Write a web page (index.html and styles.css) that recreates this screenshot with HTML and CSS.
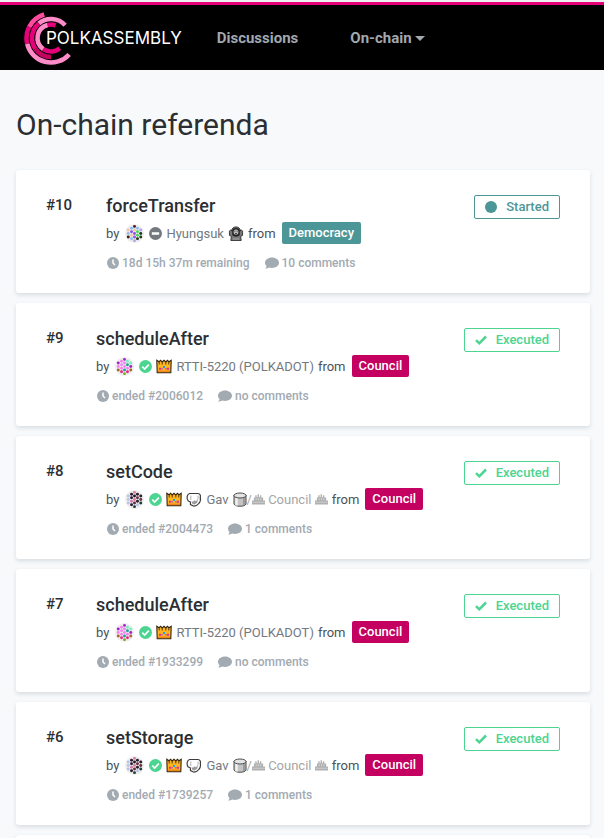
FILE: index.html
```html
<!DOCTYPE html>
<html lang="en">
<head>
<meta charset="utf-8">
<meta name="viewport" content="width=device-width, initial-scale=1">
<title>Polkassembly</title>
<link rel="stylesheet" href="styles.css">
</head>
<body>
<svg class="sprite" aria-hidden="true">
  <symbol id="clock" viewBox="0 0 12 12"><circle cx="6" cy="6" r="6" fill="currentColor"/><path d="M6 2.500V6l2 2" fill="none" stroke="#fff" stroke-width="1.500"/></symbol>
  <symbol id="comment" viewBox="0 0 14 12"><path d="M7 .5c3.900 0 7 2.300 7 5.200s-3.100 5.200-7 5.200c-1.100 0-2.100-.2-3-.5-.9.7-2.200 1.200-3.800 1.200.8-.8 1.300-1.700 1.400-2.500C.6 8.200 0 7 0 5.700 0 2.800 3.100.5 7 .5z" fill="currentColor"/></symbol>
  <symbol id="verified" viewBox="0 0 13 13"><circle cx="6.500" cy="6.500" r="6.500" fill="#4cd591"/><path d="M3.300 6.700l2.300 2.300 4.200-4.400" fill="none" stroke="#fff" stroke-width="1.700"/></symbol>
  <symbol id="minus" viewBox="0 0 13 13"><circle cx="6.500" cy="6.500" r="6.500" fill="#73797f"/><rect x="2.800" y="5.300" width="7.400" height="2.400" rx=".4" fill="#fff"/></symbol>
  <symbol id="check" viewBox="0 0 12 10"><path d="M1 5.200L4.300 8.300 11 1.500" fill="none" stroke="currentColor" stroke-width="2.500"/></symbol>
  <symbol id="crown" viewBox="0 0 16 14"><path d="M.8.800L3 2.300 4.500.800l1.700 1.700L8 .800l1.800 1.700L11.500.800 13 2.300 15.200.800l-.4 12.500H1.200z" fill="#ffb51f" stroke="#33250f" stroke-width="1.100"/><path d="M3.200 2.500V5M6.200 2.500V5M9.800 2.500V5M12.800 2.500V5" stroke="#5a3a10"/><path d="M2 11.800h12" stroke="#f07f1c" stroke-width="1.300"/><path d="M3 8.200h2.200v2H3zM10.800 8.200H13v2h-2.200z" fill="#ec2f80"/><path d="M7 6.500h2v2H7z" fill="#1fa0e8"/><path d="M5.500 8.500h1.200v1.500H5.500zM9.300 8.500h1.200v1.500H9.300z" fill="#8d5bd0"/></symbol>
  <symbol id="beard" viewBox="0 0 15 15"><path d="M3 1.500h8.500c2 .3 2.800 2 2.300 3.700.5 2.500 0 4.800-1.500 6.300-1.200 1.600-2.800 2.700-4.800 2.700L4 12.500l-.2-2.700-2-.8C0 7 0 2.500 3 1.500z" fill="#fff" stroke="#3c3c3c" stroke-width="1.200"/><path d="M4.300 3.500v4.500M11.500 3.500c.4 2 0 3.500-.8 5" fill="none" stroke="#b0b0b0" stroke-width="1"/><path d="M4.800 9.600h2l1.200-1.300 1.500 1 2-1.800-.8 3.200-2.700 1.700-2-.3z" fill="#9a9a9a"/></symbol>
  <symbol id="drum" viewBox="0 0 14 15"><path d="M1 3v9c1 3 11 3 12 0V3z" fill="#c4c4c4" stroke="#4d4d4d"/><path d="M3.500 5.500v8" stroke="#f0f0f0" stroke-width="2.500"/><path d="M11 5.500V13" stroke="#9a9a9a" stroke-width="2"/><ellipse cx="7" cy="3.500" rx="6" ry="2.500" fill="#e4e4e4" stroke="#4d4d4d"/></symbol>
  <symbol id="hall" viewBox="0 0 14 12"><path d="M0 7.500h2V4.500h1.500V2H5v2h1V1h1.500v3h1V2H10v2.500h2v3h2V12H0z" fill="#b0b0b0"/><path d="M.5 9.500h13" stroke="#cfcfcf"/><path d="M4.500 5v2.500M7 5v2.500M9.500 5v2.500" stroke="#d5d5d5"/></symbol>
  <symbol id="hood" viewBox="0 0 16 16"><path d="M1 5.500L2.500 4l.8 1.500C3.500 2.500 5.300 1 8 1s4.500 1.500 4.700 4.500L13.500 4 15 5.500v4.500l-2 1 .5 4.500h-11L3 11l-2-1z" fill="#777" stroke="#333"/><path d="M4 5c.5-4 7.500-4 8 0v4c-1 3-7 3-8 0z" fill="#1f1f1f"/><path d="M5.500 5.500c0-2.500 5-2.500 5 0v2.500c-1 1.700-4 1.700-5 0z" fill="#bbb"/><path d="M6.300 5.500h1M8.700 5.500h1M7 8h2" stroke="#222" stroke-width=".9"/><path d="M4.500 15v-2.500h7V15" fill="#8d8d8d"/></symbol>
  <symbol id="face-a" viewBox="0 0 64 64"><circle cx="32" cy="32" r="32" fill="#eee"/>
    <g fill="#4a1c14"><circle cx="32" cy="8" r="5"/><circle cx="11" cy="44" r="5"/></g>
    <g fill="#90bdf0"><circle cx="22" cy="14" r="5"/><circle cx="11" cy="32" r="5"/><circle cx="42" cy="14" r="5"/><circle cx="22" cy="50" r="5"/></g>
    <g fill="#efc6a6"><circle cx="11" cy="20" r="5"/><circle cx="32" cy="20" r="5"/><circle cx="22" cy="38" r="5"/></g>
    <g fill="#9450e6"><circle cx="22" cy="26" r="5"/><circle cx="32" cy="32" r="5"/><circle cx="32" cy="44" r="5"/></g>
    <g fill="#42d85a"><circle cx="42" cy="26" r="5"/><circle cx="42" cy="38" r="5"/></g>
    <g fill="#213c16"><circle cx="53" cy="32" r="5"/><circle cx="53" cy="44" r="5"/><circle cx="42" cy="50" r="5"/></g>
    <g fill="#b9a0f0"><circle cx="53" cy="20" r="5"/><circle cx="32" cy="56" r="5"/></g></symbol>
  <symbol id="face-b" viewBox="0 0 64 64"><circle cx="32" cy="32" r="32" fill="#eee"/>
    <g fill="#f384ef"><circle cx="22" cy="14" r="5"/><circle cx="32" cy="20" r="5"/><circle cx="22" cy="26" r="5"/><circle cx="11" cy="32" r="5"/><circle cx="22" cy="38" r="5"/><circle cx="32" cy="32" r="5"/><circle cx="42" cy="38" r="5"/></g>
    <g fill="#a526c8"><circle cx="32" cy="8" r="5"/><circle cx="11" cy="20" r="5"/><circle cx="53" cy="32" r="5"/></g>
    <g fill="#1aa894"><circle cx="42" cy="26" r="5"/><circle cx="32" cy="44" r="5"/></g>
    <g fill="#7beec0"><circle cx="42" cy="14" r="5"/><circle cx="53" cy="20" r="5"/></g>
    <g fill="#a36b26"><circle cx="11" cy="44" r="5"/><circle cx="53" cy="44" r="5"/></g>
    <g fill="#ec2687"><circle cx="22" cy="50" r="5"/><circle cx="42" cy="50" r="5"/></g><circle cx="32" cy="56" r="5" fill="#84a728"/></symbol>
  <symbol id="face-c" viewBox="0 0 64 64"><circle cx="32" cy="32" r="32" fill="#eee"/>
    <g fill="#2b1c2e"><circle cx="22" cy="14" r="5"/><circle cx="42" cy="14" r="5"/><circle cx="22" cy="26" r="5"/><circle cx="32" cy="20" r="5"/><circle cx="53" cy="20" r="5"/><circle cx="42" cy="38" r="5"/><circle cx="22" cy="50" r="5"/></g>
    <g fill="#d77ba2"><circle cx="32" cy="8" r="5"/><circle cx="32" cy="32" r="5"/><circle cx="22" cy="38" r="5"/></g>
    <g fill="#b6c4eb"><circle cx="11" cy="20" r="5"/><circle cx="11" cy="32" r="5"/><circle cx="11" cy="44" r="5"/><circle cx="42" cy="50" r="5"/></g>
    <g fill="#66303e"><circle cx="42" cy="26" r="5"/><circle cx="53" cy="32" r="5"/><circle cx="32" cy="44" r="5"/></g>
    <g fill="#1d4037"><circle cx="53" cy="44" r="5"/><circle cx="32" cy="56" r="5"/></g></symbol>
</svg>

<header class="navbar">
  <a class="brand" href="#">
    <svg class="brand-mark" viewBox="24 11 48 54" fill="none" stroke-width="4.500" aria-hidden="true">
      <path d="M44.200 14.500A24.500 24.500 0 0 0 29.200 26.900" stroke="#ff4b9f"/>
      <path d="M29.200 26.900A24.500 24.500 0 0 0 27.200 43.900" stroke="#e6007a"/>
      <path d="M27.200 43.900A24.500 24.500 0 0 0 69.200 54.400" stroke="#ff8cc8"/>
      <path d="M65.100 25.300A19 19 0 0 0 38.800 23.400" stroke="#ff8cc8"/>
      <path d="M38.800 23.400A19 19 0 0 0 35.400 48.900" stroke="#e6007a"/>
      <path d="M35.400 48.900A19 19 0 0 0 51 57" stroke="#c40061"/>
      <path d="M55.600 25.300A13.500 13.500 0 0 0 47.500 25" stroke="#e6007a"/>
      <path d="M47.500 25A13.500 13.500 0 0 0 43.300 49.100" stroke="#ff8cc8"/>
      <path d="M43.300 49.100A13.500 13.500 0 0 0 59.700 48.300" stroke="#e6007a"/>
    </svg>
    <span class="brand-name">POLKASSEMBLY</span>
  </a>
  <nav class="menu">
    <a class="menu-item" href="#">Discussions</a>
    <button class="menu-item" type="button">On-chain <span class="caret"></span></button>
  </nav>
</header>

<main class="page">
  <h1>On-chain referenda</h1>

  <article class="card">
    <div class="number">#10</div>
    <div class="content">
      <h2><a href="#">forceTransfer</a></h2>
      <div class="author"><span>by</span><svg class="avatar"><use href="#face-a"/></svg><svg class="badge"><use href="#minus"/></svg><span class="name">Hyungsuk</span><svg class="emoji"><use href="#hood"/></svg><span>from</span><span class="topic democracy">Democracy</span></div>
      <div class="meta"><span><svg class="clock"><use href="#clock"/></svg>18d 15h 37m remaining</span><span><svg class="comment"><use href="#comment"/></svg>10 comments</span></div>
    </div>
    <div class="status started"><span class="dot"></span>Started</div>
  </article>

  <article class="card narrow">
    <div class="number">#9</div>
    <div class="content">
      <h2><a href="#">scheduleAfter</a></h2>
      <div class="author"><span>by</span><svg class="avatar"><use href="#face-b"/></svg><svg class="badge"><use href="#verified"/></svg><svg class="emoji"><use href="#crown"/></svg><span class="name">RTTI-5220 (POLKADOT)</span><span>from</span><span class="topic council">Council</span></div>
      <div class="meta"><span><svg class="clock"><use href="#clock"/></svg>ended #2006012</span><span><svg class="comment"><use href="#comment"/></svg>no comments</span></div>
    </div>
    <div class="status executed"><svg class="tick"><use href="#check"/></svg>Executed</div>
  </article>

  <article class="card">
    <div class="number">#8</div>
    <div class="content">
      <h2><a href="#">setCode</a></h2>
      <div class="author"><span>by</span><svg class="avatar"><use href="#face-c"/></svg><svg class="badge"><use href="#verified"/></svg><svg class="emoji"><use href="#crown"/></svg><svg class="emoji"><use href="#beard"/></svg><span class="name">Gav</span><span class="sub"><svg class="drum"><use href="#drum"/></svg>/<svg class="hall"><use href="#hall"/></svg>&nbsp;Council&nbsp;<svg class="hall"><use href="#hall"/></svg></span><span>from</span><span class="topic council">Council</span></div>
      <div class="meta"><span><svg class="clock"><use href="#clock"/></svg>ended #2004473</span><span><svg class="comment"><use href="#comment"/></svg>1 comments</span></div>
    </div>
    <div class="status executed"><svg class="tick"><use href="#check"/></svg>Executed</div>
  </article>

  <article class="card narrow">
    <div class="number">#7</div>
    <div class="content">
      <h2><a href="#">scheduleAfter</a></h2>
      <div class="author"><span>by</span><svg class="avatar"><use href="#face-b"/></svg><svg class="badge"><use href="#verified"/></svg><svg class="emoji"><use href="#crown"/></svg><span class="name">RTTI-5220 (POLKADOT)</span><span>from</span><span class="topic council">Council</span></div>
      <div class="meta"><span><svg class="clock"><use href="#clock"/></svg>ended #1933299</span><span><svg class="comment"><use href="#comment"/></svg>no comments</span></div>
    </div>
    <div class="status executed"><svg class="tick"><use href="#check"/></svg>Executed</div>
  </article>

  <article class="card">
    <div class="number">#6</div>
    <div class="content">
      <h2><a href="#">setStorage</a></h2>
      <div class="author"><span>by</span><svg class="avatar"><use href="#face-c"/></svg><svg class="badge"><use href="#verified"/></svg><svg class="emoji"><use href="#crown"/></svg><svg class="emoji"><use href="#beard"/></svg><span class="name">Gav</span><span class="sub"><svg class="drum"><use href="#drum"/></svg>/<svg class="hall"><use href="#hall"/></svg>&nbsp;Council&nbsp;<svg class="hall"><use href="#hall"/></svg></span><span>from</span><span class="topic council">Council</span></div>
      <div class="meta"><span><svg class="clock"><use href="#clock"/></svg>ended #1739257</span><span><svg class="comment"><use href="#comment"/></svg>1 comments</span></div>
    </div>
    <div class="status executed"><svg class="tick"><use href="#check"/></svg>Executed</div>
  </article>

  <article class="card"></article>
</main>
</body>
</html>
```
FILE: styles.css
```css
* { box-sizing: border-box; }
body {
  margin: 0;
  border-top: 2px solid #eceef0;
  background: #f7f9fb;
  color: #4b5157;
  font-family: Roboto, "Liberation Sans", sans-serif;
  font-size: 13px;
}
a { color: inherit; text-decoration: none; }
svg { flex: none; }
.sprite { display: none; }

.navbar {
  display: flex;
  align-items: center;
  gap: 35px;
  height: 68px;
  padding: 0 24px;
  border-top: 3px solid #e6007a;
  background: #000;
}
.brand { display: flex; align-items: center; color: #fff; }
.brand-mark { width: 48px; height: 54px; }
.brand-name {
  margin-left: -26px;
  font-family: Inter, "Open Sans", sans-serif;
  font-size: 17px;
  font-weight: 400;
}
.menu { display: flex; align-items: center; gap: 52px; }
.menu-item {
  padding: 0;
  border: 0;
  background: none;
  color: #a1a8b0;
  font-family: inherit;
  font-size: 15px;
  font-weight: 700;
  line-height: 20px;
}
.caret {
  display: inline-block;
  border: 5px solid transparent;
  border-top-color: currentColor;
  border-bottom: 0;
  vertical-align: 2px;
}

.page { display: flex; flex-direction: column; gap: 10px; padding: 36px 14px 0 16px; }
h1 {
  margin: 0 0 16px;
  color: #2b2f33;
  font-size: 30px;
  font-weight: 400;
  line-height: 38px;
}
.card {
  display: flex;
  align-items: flex-start;
  flex: none;
  min-height: 123px;
  padding: 24px 30px 20px;
  border-radius: 3px;
  background: #fff;
  box-shadow: 0 2px 4px rgba(40, 55, 70, .14);
}
.number { flex: 0 0 60px; color: #2b2f33; font-size: 15px; font-weight: 500; line-height: 22px; }
.narrow .number { flex-basis: 50px; }
.content { flex: 1; min-width: 0; }
h2 { margin: 0; color: #2b2f33; font-size: 18px; font-weight: 500; line-height: 24px; }

.author { display: flex; align-items: center; gap: 4px; height: 22px; margin-top: 4px; white-space: nowrap; }
.name { color: #73797f; }
.avatar { width: 19px; height: 19px; margin: 0 1px 0 2px; }
.badge { width: 13px; height: 13px; }
.emoji { width: 16px; height: 15px; }
.sub { display: flex; align-items: center; color: #a5a5a5; }
.drum { width: 14px; height: 15px; }
.hall { width: 13px; height: 12px; }
.topic {
  padding: 0 7px;
  margin-left: 2px;
  border-radius: 2px;
  color: #fff;
  font-size: 13px;
  font-weight: 500;
  line-height: 22px;
}
.democracy { background: #4d9698; }
.council { background: #c40061; }

.meta { display: flex; gap: 15px; margin-top: 10px; color: #a2aab2; font-size: 12px; font-weight: 500; line-height: 18px; }
.meta span { display: flex; align-items: center; gap: 3px; }
.clock { width: 12px; height: 12px; margin-left: 1px; }
.comment { width: 14px; height: 12px; }

.status {
  display: flex;
  align-items: center;
  gap: 9px;
  margin-top: 1px;
  padding: 0 10px;
  border: 1px solid;
  border-radius: 2px;
  font-size: 13px;
  font-weight: 500;
  line-height: 22px;
}
.started { color: #4d9698; }
.executed { color: #4cd591; }
.dot { width: 12px; height: 12px; border-radius: 50%; background: currentColor; }
.tick { width: 12px; height: 10px; }
```
